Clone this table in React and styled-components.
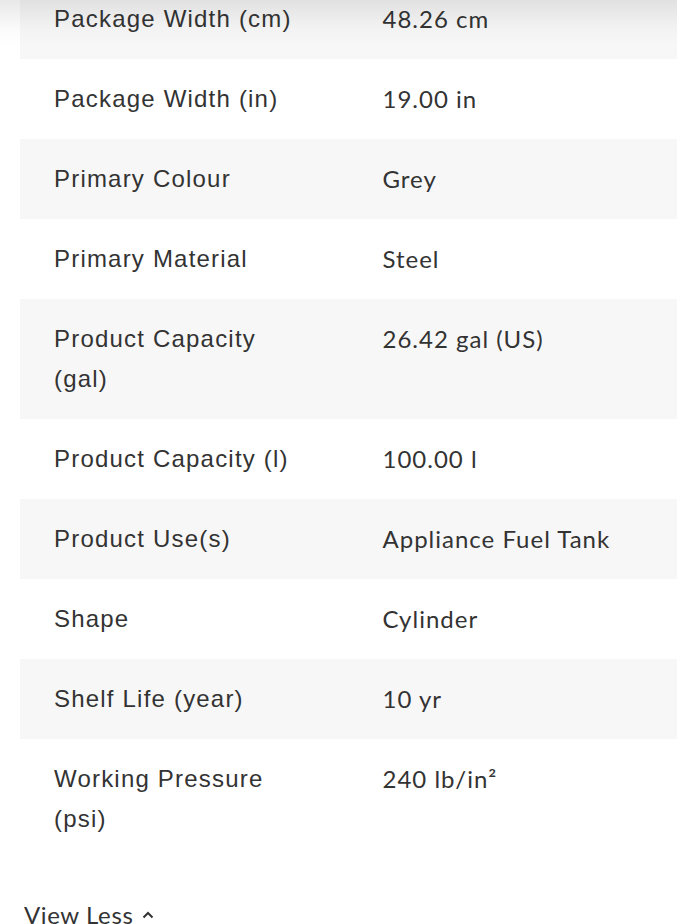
import React from "react";
import styled, { createGlobalStyle } from "styled-components";

const Global = createGlobalStyle`
  html, body { margin: 0; padding: 0; background: #fff; }
  body { overflow: hidden; }
`;

const Page = styled.div`
  position: relative;
  width: 677px;
  height: 924px;
  overflow: hidden;
  background: #fff;
`;

const TopShade = styled.div`
  position: absolute;
  left: 0;
  top: 0;
  right: 0;
  height: 46px;
  background: linear-gradient(to bottom, rgba(0,0,0,0.09), rgba(0,0,0,0.02) 60%, rgba(0,0,0,0));
  pointer-events: none;
`;

const Specs = styled.div`
  margin: -21px 0 0 20px;
  display: flex;
  flex-direction: column;
`;

const Row = styled.div`
  display: grid;
  grid-template-columns: 1fr 1fr;
  background: ${(p) => (p.$shaded ? "#f7f7f7" : "#fff")};
`;

const Label = styled.div`
  padding: 20px 50px 20px 34px;
  font-family: "Liberation Sans", Arial, sans-serif;
  font-size: 24px;
  line-height: 40px;
  letter-spacing: 1.2px;
  color: #333;
`;

const Value = styled.div`
  padding: 20px 20px 20px 34px;
  font-family: Lato, "Liberation Sans", sans-serif;
  font-size: 24px;
  line-height: 40px;
  letter-spacing: 1px;
  color: #333;
`;

const Toggle = styled.button`
  margin: 36px 0 0 24px;
  padding: 0;
  border: 0;
  background: none;
  display: inline-flex;
  align-items: center;
  gap: 9px;
  font-family: Lato, "Liberation Sans", sans-serif;
  font-size: 24px;
  line-height: 40px;
  letter-spacing: 0.6px;
  color: #333;
  cursor: pointer;
`;

const rows = [
  ["Package Width (cm)", "48.26 cm"],
  ["Package Width (in)", "19.00 in"],
  ["Primary Colour", "Grey"],
  ["Primary Material", "Steel"],
  ["Product Capacity (gal)", "26.42 gal (US)"],
  ["Product Capacity (l)", "100.00 l"],
  ["Product Use(s)", "Appliance Fuel Tank"],
  ["Shape", "Cylinder"],
  ["Shelf Life (year)", "10 yr"],
  ["Working Pressure (psi)", "240 lb/in²"],
];

export default function App() {
  return (
    <Page>
      <Global />
      <Specs>
        {rows.map(([k, v], i) => (
          <Row key={k} $shaded={i % 2 === 0}>
            <Label>{k}</Label>
            <Value>{v}</Value>
          </Row>
        ))}
      </Specs>
      <Toggle>
        View Less
        <svg width="12" height="8" viewBox="0 0 12 8" aria-hidden="true">
          <polyline points="1.5,6.5 6,2 10.5,6.5" fill="none" stroke="#333" strokeWidth="2" />
        </svg>
      </Toggle>
      <TopShade />
    </Page>
  );
}
